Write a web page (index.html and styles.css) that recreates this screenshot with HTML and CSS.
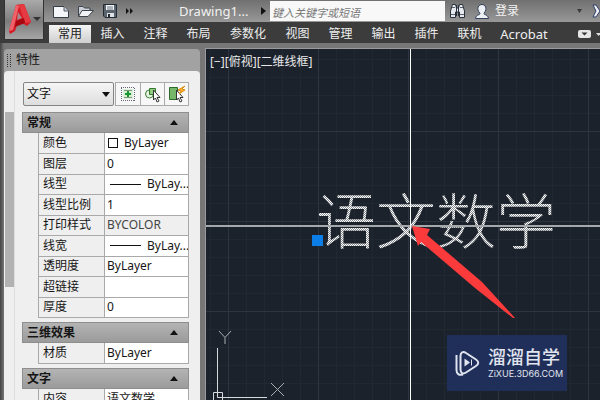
FILE: index.html
```html
<!DOCTYPE html>
<html lang="zh-CN">
<head>
<meta charset="utf-8">
<title>Drawing1</title>
<link rel="stylesheet" href="styles.css">
</head>
<body>
<div class="app">
  <header class="top">
    <button class="logo" aria-label="应用程序菜单">
      <svg width="39" height="40" viewBox="0 0 39 40">
        <path d="M4 31 11 5 19 4 26 22 22 26 17 23 12 25 10 31 5 34Z" fill="#d31a25"/>
        <path d="M4 31 11 5 14 6 8 30Z" fill="#f0626a"/>
        <path d="M11 5 19 4 26 22 20 23 14 6Z" fill="#e53a42"/>
        <path d="M11 21 19 18 20 23 10 27Z" fill="#a80710"/>
        <path d="M13 12 17 18 12 20Z" fill="#a9898b"/>
        <path d="M28 17h8l-4 4Z" fill="#333"/>
      </svg>
    </button>
    <div class="bars">
      <div class="titlebar">
        <div class="quick">
          <button aria-label="新建"><svg width="18" height="16" viewBox="0 0 18 16"><path d="M1.500 3.500H12L16.500 8V14.500H1.500Z" fill="#f5f6f7" stroke="#333b44"/><path d="M12 3.500V8H16.500" fill="#c6ccd2" stroke="#55606b"/></svg></button>
          <button aria-label="打开"><svg width="18" height="16" viewBox="0 0 18 16"><path d="M1.500 13V3.500H6L7.500 5H13V8" fill="#cbd1d6" stroke="#3b444d"/><path d="M1.500 13.500 5 7.500H16.500L11 13.500Z" fill="#f0f2f4" stroke="#3b444d"/></svg></button>
          <button aria-label="保存"><svg width="16" height="16" viewBox="0 0 16 16"><path d="M1.500 1.500H14.500V14.500H3L1.500 13Z" fill="#59646f" stroke="#222b34"/><path d="M4 2h8v5H4Z" fill="#f2f4f5"/><path d="M5 4h6M5 6h6" stroke="#65717c"/><path d="M5 10h7v4H5Z" fill="#dfe3e6"/><path d="M6 11h2v3H6Z" fill="#222b34"/></svg></button>
          <button aria-label="更多"><svg width="9" height="8" viewBox="0 0 9 8"><path d="M1 1 4 4 1 7ZM5 1 8 4 5 7Z" fill="#111"/></svg></button>
        </div>
        <span class="doc">Drawing1...</span>
        <svg class="next" width="5" height="8" viewBox="0 0 5 8"><path d="M0 0 5 4 0 8Z" fill="#111"/></svg>
        <input class="search" type="text" aria-label="搜索" placeholder="键入关键字或短语">
        <button class="binoc" aria-label="搜索"><svg width="18" height="16" viewBox="0 0 18 16"><path d="M3.500 1.500 1.500 8V14.500H6.500V9H10.500V14.500H15.500V8L13.500 1.500H10.500L9.500 5H7.500L6.500 1.500Z" fill="#e6eaee" stroke="#29313a"/><path d="M7.500 2v11M9.500 2v11" stroke="#29313a"/><path d="M2 11.500h4M11 11.500h4M3 4.500h3M11 4.500h3" stroke="#56626e"/></svg></button>
        <button class="login"><svg width="16" height="17" viewBox="0 0 16 17"><path d="M1.500 15.500C2 11 6 12.500 6 10.500 1.500 5 5 1.500 8 1.500S14 5 10 10.500C10 12.500 14 11 14.500 15.500Z" fill="#eceff4" stroke="#34415c"/></svg>登录</button>
        <svg class="drop" width="5" height="4" viewBox="0 0 5 4"><path d="M0 0h5L2.500 4Z" fill="#3a3a3a"/></svg>
        <svg class="exchange" width="8" height="14" viewBox="0 0 8 14"><path d="M1 1H4L8 7 4 13H1L4 7Z" fill="#f1f3f8" stroke="#2c3c66"/></svg>
      </div>
      <nav class="tabs">
        <button class="tab on">常用</button><button class="tab">插入</button><button class="tab">注释</button><button class="tab">布局</button><button class="tab wide">参数化</button><button class="tab">视图</button><button class="tab">管理</button><button class="tab">输出</button><button class="tab">插件</button><button class="tab">联机</button><button class="tab acrobat">Acrobat</button>
        <button class="ribbon" aria-label="最小化功能区"><svg width="22" height="9" viewBox="0 0 22 9"><rect width="13" height="8" rx="2" fill="#e6e6e6"/><path d="M3.500 2.500h6L6.500 5.500Z" fill="#333"/><path d="M18 3h5l-2.500 3Z" fill="#ddd"/></svg></button>
      </nav>
    </div>
  </header>

  <main class="work">
    <aside class="palette">
      <h1 class="caption"><svg width="4" height="13" viewBox="0 0 4 13"><path d="M.5 0v13M3.500 0v13" stroke="#333" stroke-dasharray="1 1"/></svg>特性</h1>
      <div class="pbody">
        <div class="rail"><div class="thumb"></div></div>
        <div class="props">
          <div class="pick">
            <div class="combo"><select aria-label="对象类型"><option>文字</option></select></div>
            <div class="tools">
              <button aria-label="切换 PICKADD"><svg width="18" height="18" viewBox="0 0 18 18"><path d="M2 2.500h14M2 15.500h14M2.500 3v13M15.500 3v13" stroke="#667" stroke-dasharray="1 1"/><path d="M4 4h10v10H4Z" fill="#d7f0d4"/><path d="M5 5.500h8M5 12.500h8" stroke="#8a958a"/><path d="M9 6v6M6 9h6" stroke="#14962a" stroke-width="2"/></svg></button>
              <button aria-label="选择对象"><svg width="18" height="18" viewBox="0 0 18 18"><circle cx="5.500" cy="9" r="4" fill="#e4f3df" stroke="#3f7d36"/><path d="M5.500 3.500h6v6h-6Z" fill="#8fcb80" stroke="#347a2b"/><path d="M9.500 5v10l2-2 1.500 4 2-1-2-3.500H16Z" fill="#fff" stroke="#333"/></svg></button>
              <button aria-label="快速选择"><svg width="18" height="18" viewBox="0 0 18 18"><path d="M1.500 2.500h8v12h-8Z" fill="#75b66b" stroke="#2d6b29"/><path d="M8.500 5v10l2-2 1.500 4 2-1-2-3.500H15Z" fill="#fff" stroke="#333"/><path d="M17 1 14 4l3 1-6 4 2-3-3-1Z" fill="#f9b529" stroke="#dd8b12"/></svg></button>
            </div>
          </div>

          <section>
            <h2><button class="head">常规<svg width="8" height="5" viewBox="0 0 8 5"><path d="M0 5 4 0 8 5Z" fill="#111"/></svg></button></h2>
            <table class="grid general">
              <tr><th scope="row">颜色</th><td><span class="cell"><i class="swatch"></i>ByLayer</span></td></tr>
              <tr><th scope="row">图层</th><td>0</td></tr>
              <tr><th scope="row">线型</th><td><span class="cell"><i class="line"></i>ByLay...</span></td></tr>
              <tr><th scope="row">线型比例</th><td>1</td></tr>
              <tr><th scope="row">打印样式</th><td class="locked">BYCOLOR</td></tr>
              <tr><th scope="row">线宽</th><td><span class="cell"><i class="line"></i>ByLay...</span></td></tr>
              <tr><th scope="row">透明度</th><td>ByLayer</td></tr>
              <tr><th scope="row">超链接</th><td></td></tr>
              <tr><th scope="row">厚度</th><td>0</td></tr>
            </table>
          </section>
          <section>
            <h2><button class="head">三维效果<svg width="8" height="5" viewBox="0 0 8 5"><path d="M0 5 4 0 8 5Z" fill="#111"/></svg></button></h2>
            <table class="grid"><tr><th scope="row">材质</th><td>ByLayer</td></tr></table>
          </section>
          <section>
            <h2><button class="head">文字<svg width="8" height="5" viewBox="0 0 8 5"><path d="M0 5 4 0 8 5Z" fill="#111"/></svg></button></h2>
            <table class="grid"><tr><th scope="row">内容</th><td>语文数学</td></tr></table>
          </section>
        </div>
      </div>
    </aside>

    <div class="canvas">
      <div class="viewlabel">[−][俯视][二维线框]</div>
      <div class="entity">语文数学</div>
      <div class="cross-h"></div>
      <div class="cross-v"></div>
      <div class="grip"></div>
      <svg class="arrow" width="104" height="94" viewBox="0 0 104 94"><path d="M0 0 18 3 15 9 70 56 103 92 101 92 63 62 9 16 6 20Z" fill="#fb3b3b"/></svg>
      <svg class="ucs" width="76" height="72" viewBox="0 0 76 72"><path d="M5.500 18V67.500H55M1.500 62.500h9v9h-9Z" fill="none" stroke="#d8dbde"/><path d="M7 1 13 7.500 19 1M13 7.500V14M59 53 72 66M72 53 59 66" fill="none" stroke="#a9adb2"/></svg>
      <div class="badge">
        <svg width="25" height="26" viewBox="0 0 25 26"><path d="M5.500 6C5.500 2.500 8 1 11 3L21 9.500C24 11.500 24 14 21 16L11 22.500C8 24.500 5.500 23 5.500 19.500ZM1.500 5V20C1.500 24 4 25.500 8 24.500" fill="none" stroke="#dfe4f0" stroke-width="2"/><path d="M9.500 8.500 15 12.500 9.500 16.500Z" fill="#dfe4f0"/><path d="M16.500 9.500v6" stroke="#dfe4f0"/></svg>
        <div class="brand"><strong>溜溜自学</strong><span>ZiXUE.3D66.COM</span></div>
      </div>
    </div>
  </main>
</div>
</body>
</html>
```
FILE: styles.css
```css
* { box-sizing: border-box; }
body {
  margin: 0;
  background: #6b6b6b;
  font: 12px/16px "Noto Sans", "Noto Sans CJK SC", sans-serif;
  color: #151515;
  overflow: hidden;
}
button { margin: 0; padding: 0; border: 0; background: none; font: inherit; color: inherit; }
svg { display: block; flex: none; }
.app { display: flex; flex-direction: column; height: 100vh; overflow: hidden; }

.top { display: flex; flex: none; height: 43px; padding-left: 4px; background: #3c3c3c; }
.logo { flex: none; width: 40px; height: 40px; border: 1px solid #333; border-top: 0; background: linear-gradient(#aaa, #7c7c7c 55%, #a6a6a6); }
.bars { flex: 1; min-width: 0; }
.titlebar { display: flex; align-items: center; height: 22px; padding-left: 8px; background: linear-gradient(#707070, #989898); color: #f2f2f2; }
.quick { display: flex; align-items: center; gap: 7px; width: 127px; }
.doc { width: 70px; font-size: 13px; line-height: 18px; white-space: nowrap; }
.next { margin: 0 4px 0 12px; }
.search { flex: 0 1 175px; min-width: 0; height: 20px; align-self: flex-start; margin: 1px 4px 0 0; padding: 2px 2px 0; border: 0; background: #f8f8f8; font: italic 11px/16px "Noto Sans CJK SC", sans-serif; }
.search::placeholder { color: #777; opacity: 1; }
.binoc { margin-right: 7px; }
.login { display: flex; align-items: center; gap: 5px; font-size: 12px; }
.drop { margin-left: auto; }
.exchange { margin-left: 10px; }

.tabs { display: flex; align-items: flex-end; height: 21px; padding-left: 5px; color: #eee; }
.tab { flex: none; width: 43px; height: 18px; line-height: 18px; }
.tab.on { width: 42px; background: linear-gradient(#f4f4f4, #cfcfcf); color: #222; }
.tab.wide { width: 56px; }
.tab.acrobat { width: 66px; font-size: 13px; }
.ribbon { margin: 0 0 4px auto; }

.work { display: flex; flex: 1; min-height: 0; padding-left: 4px; background: linear-gradient(90deg, #444 0, #777 4px, #777); }
.palette { display: flex; flex-direction: column; flex: none; width: 196px; margin-top: 6px; border-radius: 4px 4px 0 0; background: #a2a2a2; overflow: hidden; }
.caption { display: flex; align-items: center; gap: 5px; flex: none; height: 22px; margin: 0; padding-left: 3px; font-size: 12px; font-weight: 400; }
.pbody { display: flex; flex: 1; min-height: 0; border-radius: 4px 4px 0 0; background: #efefef; }
.rail { flex: none; width: 11px; padding: 41px 0 0 1px; border-right: 1px solid #ddd; }
.thumb { height: 175px; background: #b2b2b2; }
.props { flex: 1; padding: 11px 11px 0 7px; }
.pick { display: flex; justify-content: space-between; height: 30px; padding: 0 0 6px 1px; }
.combo { position: relative; width: 91px; height: 24px; }
.combo::after { content: ""; position: absolute; right: 4px; top: 10px; border: 4px solid transparent; border-top: 5px solid #111; border-bottom: 0; pointer-events: none; }
.combo select { width: 100%; height: 100%; padding: 0 3px; border: 1px solid #858585; border-radius: 2px; background: linear-gradient(#f5f5f5, #dedede); color: #111; font: inherit; appearance: none; }
.tools { display: flex; height: 24px; border: 1px solid #aaa; background: #f7f7f7; }
.tools button { display: grid; place-items: center; width: 24px; border-left: 1px solid #aaa; }
.tools button:first-child { border-left: 0; }

section { margin-bottom: 4px; }
h2 { margin: 0; font-size: 12px; }
.head { display: flex; align-items: center; justify-content: space-between; width: 100%; height: 21px; padding: 0 10px 0 4px; border: 1px solid #8e8e8e; background: linear-gradient(#b4b4b4, #9b9b9b); font-weight: 700; }
.grid { width: calc(100% - 16px); height: 21px; margin-left: 16px; border-collapse: collapse; table-layout: fixed; }
.general { height: 185px; }
.grid th, .grid td { height: 20px; padding: 0 0 0 4px; border: 1px solid #a9a9a9; border-top: 0; text-align: left; font-weight: 400; line-height: 16px; white-space: nowrap; overflow: hidden; }
.grid th { width: 66px; background: #efefef; }
.grid td { padding-left: 2px; background: #fff; }
.grid td.locked { background: #efefef; color: #444; }
.cell { display: flex; align-items: center; gap: 6px; }
.swatch { width: 10px; height: 10px; margin-left: 1px; border: 1px solid #111; }
.line { flex: none; width: 31px; margin-left: 3px; border-top: 1px solid #111; }

.canvas {
  position: relative; flex: 1; min-width: 0; margin: 5px 0 0 5px; border: 1px solid #9a9a9a; border-width: 1px 0 0 1px; overflow: hidden;
  background:
    linear-gradient(90deg, #2d3540 1px, transparent 1px) 22px 0 / 90px 90px,
    linear-gradient(#2d3540 1px, transparent 1px) 0 82px / 90px 90px,
    linear-gradient(90deg, #202832 1px, transparent 1px) 4px 0 / 18px 18px,
    linear-gradient(#202832 1px, transparent 1px) 0 10px / 18px 18px,
    #1c222c;
}
.viewlabel { padding: 5px 4px; color: #e8e8e8; font-size: 12px; }
.entity {
  position: absolute; left: 110px; top: 137px; font: 300 60px/64px "Noto Sans CJK SC", sans-serif; white-space: nowrap; color: transparent;
  background: repeating-conic-gradient(#fff 0 25%, #8b9096 0 50%) 0 0 / 2px 2px; -webkit-background-clip: text; background-clip: text;
}
.cross-h { position: absolute; left: 0; right: 0; top: 176px; height: 2px; background: #a5a8ab; }
.cross-v { position: absolute; top: 0; bottom: 0; left: 204px; width: 1px; background: #fff; }
.grip { position: absolute; left: 106px; top: 186px; width: 11px; height: 11px; background: #0c7ee8; }
.arrow { position: absolute; left: 206px; top: 177px; }
.ucs { position: absolute; left: 6px; top: 281px; }
.badge { position: absolute; left: 241px; top: 286px; display: flex; align-items: center; gap: 8px; width: 120px; height: 56px; padding-left: 8px; background: #202f59; color: #e1e5ef; }
.brand { display: flex; flex-direction: column; gap: 1px; }
.brand strong { font-size: 18px; line-height: 20px; font-weight: 500; }
.brand span { font: 9px/12px "Inter", sans-serif; }
```
